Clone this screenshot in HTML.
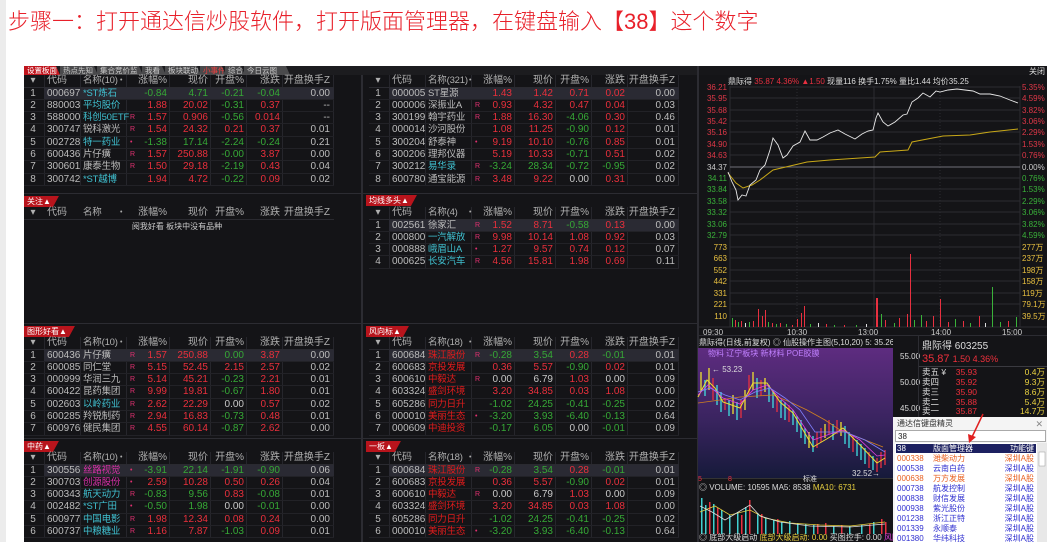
<!DOCTYPE html>
<html><head><meta charset="utf-8"><style>
*{margin:0;padding:0;box-sizing:border-box}
body{width:1064px;height:542px;overflow:hidden;background:#fff;position:relative;font-family:"Liberation Sans","Noto Sans CJK SC",sans-serif}
.title{position:absolute;left:8px;top:4px;font-size:22px;color:#e8202a;font-family:"Liberation Sans","Noto Sans CJK SC",sans-serif;white-space:nowrap;font-weight:300}
.lstrip{position:absolute;left:0;top:0;width:6px;height:542px;background:#ececec}
.dark{position:absolute;left:24px;top:66px;width:1023px;height:476px;background:#141417}
.tabs{position:absolute;left:24px;top:66px;height:9px;width:673px;background:#1c1c1f}
.tab{position:absolute;top:0;height:9px;font-size:7.5px;line-height:9px;color:#ccc;background:#4a4a4c;padding-left:3px;clip-path:polygon(0 0,calc(100% - 4px) 0,100% 100%,0 100%)}
.tbl{position:absolute;width:310px;font-size:10px;color:#bcbcbc;background:
linear-gradient(#26262c,#26262c) 20px 0/1px 100% no-repeat,
linear-gradient(#26262c,#26262c) 56px 0/1px 100% no-repeat,
linear-gradient(#26262c,#26262c) 102px 0/1px 100% no-repeat,
linear-gradient(#26262c,#26262c) 145px 0/1px 100% no-repeat,
linear-gradient(#26262c,#26262c) 186px 0/1px 100% no-repeat,
linear-gradient(#26262c,#26262c) 222px 0/1px 100% no-repeat,
linear-gradient(#26262c,#26262c) 258px 0/1px 100% no-repeat,
linear-gradient(#26262c,#26262c) 309px 0/1px 100% no-repeat}
.r{position:relative;height:12.3px;line-height:12px;border-bottom:1px solid #222227;white-space:nowrap}
.h{height:12.5px;border-bottom:1px solid #2a2a30;color:#b0b0b0}
.r span{position:absolute;top:0}
.n{left:0;width:18px;text-align:center}
.c{left:23px}
.m{left:59px;font-size:9.5px;letter-spacing:-0.2px}
.k{left:106px;font-size:7px;color:#e03070}
.a{left:110px;width:33px;text-align:right}
.b{left:146px;width:38px;text-align:right}
.o{left:186px;width:34px;text-align:right}
.d{left:222px;width:34px;text-align:right}
.t{left:258px;width:48px;text-align:right}
.sel{background:linear-gradient(90deg,transparent 20px,#2a2a33 20px,#2a2a33 310px,transparent 310px)}
.R{color:#e8303c}.G{color:#36a836}.W{color:#c8c8c8}.C{color:#40c0d0}.M{color:#d830a8}.RN{color:#e01c1c}
.lbl{position:absolute;height:11px;font-size:8px;line-height:11px;color:#fff;background:#b8141c;padding:0 8px 0 3px;clip-path:polygon(0 0,100% 0,calc(100% - 6px) 100%,0 100%)}
.sep{position:absolute;background:#2c2c32}
</style></head><body>
<div class="lstrip"></div>
<div class="title">步骤一：打开通达信炒股软件，打开版面管理器，在键盘输入【38】这个数字</div>
<div class="dark"></div>
<div class="tabs">
<div class="tab" style="left:0;width:36px;background:#c0141c;color:#fff">设置板面</div>
<div class="tab" style="left:36px;width:38px">热点先知</div>
<div class="tab" style="left:73px;width:46px">集合竞价监测</div>
<div class="tab" style="left:118px;width:24px">我看盘</div>
<div class="tab" style="left:141px;width:36px">板块联动</div>
<div class="tab" style="left:176px;width:26px;color:#f04040">小事件</div>
<div class="tab" style="left:201px;width:20px">综合</div>
<div class="tab" style="left:220px;width:46px">今日云图</div>
</div>
<div class="sep" style="left:361px;top:75px;width:2px;height:467px"></div>
<div class="sep" style="left:697px;top:66px;width:2px;height:476px"></div>
<div class="sep" style="left:24px;top:193px;width:673px;height:1px"></div>
<div class="sep" style="left:24px;top:323px;width:673px;height:1px"></div>
<div class="sep" style="left:24px;top:438px;width:673px;height:1px"></div>

<!-- Left top -->
<div class="tbl" style="left:24px;top:75px">
<div class="r h"><span class="n">▾</span><span class="c">代码</span><span class="m">名称(10)</span><span class="k" style="color:#aaa;left:96px">•</span><span class="a">涨幅%</span><span class="b">现价</span><span class="o">开盘%</span><span class="d">涨跌</span><span class="t">开盘换手Z</span></div>
<div class="r sel"><span class="n">1</span><span class="c">000697</span><span class="m C">*ST炼石</span><span class="a G">-0.84</span><span class="b G">4.71</span><span class="o G">-0.21</span><span class="d G">-0.04</span><span class="t">0.00</span></div>
<div class="r"><span class="n">2</span><span class="c">880003</span><span class="m C">平均股价</span><span class="a R">1.88</span><span class="b R">20.02</span><span class="o G">-0.31</span><span class="d R">0.37</span><span class="t">--</span></div>
<div class="r"><span class="n">3</span><span class="c">588000</span><span class="m C">科创50ETF</span><span class="k">R</span><span class="a R">1.57</span><span class="b R">0.906</span><span class="o G">-0.56</span><span class="d R">0.014</span><span class="t">--</span></div>
<div class="r"><span class="n">4</span><span class="c">300747</span><span class="m">锐科激光</span><span class="k">R</span><span class="a R">1.54</span><span class="b R">24.32</span><span class="o R">0.21</span><span class="d R">0.37</span><span class="t">0.01</span></div>
<div class="r"><span class="n">5</span><span class="c">002728</span><span class="m C">特一药业</span><span class="k">•</span><span class="a G">-1.38</span><span class="b G">17.14</span><span class="o G">-2.24</span><span class="d G">-0.24</span><span class="t">0.21</span></div>
<div class="r"><span class="n">6</span><span class="c">600436</span><span class="m">片仔癀</span><span class="k">R</span><span class="a R">1.57</span><span class="b R">250.88</span><span class="o G">-0.00</span><span class="d R">3.87</span><span class="t">0.00</span></div>
<div class="r"><span class="n">7</span><span class="c">300601</span><span class="m">康泰生物</span><span class="k">R</span><span class="a R">1.50</span><span class="b R">29.18</span><span class="o G">-2.19</span><span class="d R">0.43</span><span class="t">0.04</span></div>
<div class="r"><span class="n">8</span><span class="c">300742</span><span class="m C">*ST越博</span><span class="a R">1.94</span><span class="b R">4.72</span><span class="o G">-0.22</span><span class="d R">0.09</span><span class="t">0.02</span></div>
</div>

<!-- 关注 -->
<div class="lbl" style="left:24px;top:196px">关注▲</div>
<div class="tbl" style="left:24px;top:207px;background:none">
<div class="r h"><span class="n">▾</span><span class="c">代码</span><span class="m">名称</span><span class="k" style="color:#aaa;left:96px">•</span><span class="a">涨幅%</span><span class="b">现价</span><span class="o">开盘%</span><span class="d">涨跌</span><span class="t">开盘换手Z</span></div>
<div style="position:absolute;left:0;width:306px;top:14px;text-align:center;font-size:8px;color:#ccc">阅我好看 板块中没有品种</div>
</div>

<!-- Middle top -->
<div class="tbl" style="left:369px;top:75px">
<div class="r h"><span class="n">▾</span><span class="c">代码</span><span class="m">名称(321)</span><span class="k" style="color:#aaa;left:100px">•</span><span class="a">涨幅%</span><span class="b">现价</span><span class="o">开盘%</span><span class="d">涨跌</span><span class="t">开盘换手Z</span></div>
<div class="r sel"><span class="n">1</span><span class="c">000005</span><span class="m">ST星源</span><span class="a R">1.43</span><span class="b R">1.42</span><span class="o R">0.71</span><span class="d R">0.02</span><span class="t">0.00</span></div>
<div class="r"><span class="n">2</span><span class="c">000006</span><span class="m">深振业A</span><span class="k">R</span><span class="a R">0.93</span><span class="b R">4.32</span><span class="o R">0.47</span><span class="d R">0.04</span><span class="t">0.03</span></div>
<div class="r"><span class="n">3</span><span class="c">300199</span><span class="m">翰宇药业</span><span class="k">R</span><span class="a R">1.88</span><span class="b R">16.30</span><span class="o G">-4.06</span><span class="d R">0.30</span><span class="t">0.46</span></div>
<div class="r"><span class="n">4</span><span class="c">000014</span><span class="m">沙河股份</span><span class="a R">1.08</span><span class="b R">11.25</span><span class="o G">-0.90</span><span class="d R">0.12</span><span class="t">0.01</span></div>
<div class="r"><span class="n">5</span><span class="c">300204</span><span class="m">舒泰神</span><span class="k">•</span><span class="a R">9.19</span><span class="b R">10.10</span><span class="o G">-0.76</span><span class="d R">0.85</span><span class="t">0.01</span></div>
<div class="r"><span class="n">6</span><span class="c">300206</span><span class="m">理邦仪器</span><span class="a R">5.19</span><span class="b R">10.33</span><span class="o G">-0.71</span><span class="d R">0.51</span><span class="t">0.02</span></div>
<div class="r"><span class="n">7</span><span class="c">300212</span><span class="m C">易华录</span><span class="k">R</span><span class="a G">-3.24</span><span class="b G">28.34</span><span class="o G">-0.72</span><span class="d G">-0.95</span><span class="t">0.02</span></div>
<div class="r"><span class="n">8</span><span class="c">600780</span><span class="m">通宝能源</span><span class="k">R</span><span class="a R">3.48</span><span class="b R">9.22</span><span class="o W">0.00</span><span class="d R">0.31</span><span class="t">0.00</span></div>
</div>

<!-- 均线多头 -->
<div class="lbl" style="left:366px;top:195px">均线多头▲</div>
<div class="tbl" style="left:369px;top:207px">
<div class="r h"><span class="n">▾</span><span class="c">代码</span><span class="m">名称(4)</span><span class="k" style="color:#aaa;left:100px">•</span><span class="a">涨幅%</span><span class="b">现价</span><span class="o">开盘%</span><span class="d">涨跌</span><span class="t">开盘换手Z</span></div>
<div class="r sel"><span class="n">1</span><span class="c">002561</span><span class="m">徐家汇</span><span class="k">R</span><span class="a R">1.52</span><span class="b R">8.71</span><span class="o G">-0.58</span><span class="d R">0.13</span><span class="t">0.00</span></div>
<div class="r"><span class="n">2</span><span class="c">000800</span><span class="m C">一汽解放</span><span class="k">R</span><span class="a R">9.98</span><span class="b R">10.14</span><span class="o R">1.08</span><span class="d R">0.92</span><span class="t">0.03</span></div>
<div class="r"><span class="n">3</span><span class="c">000888</span><span class="m C">峨眉山A</span><span class="k">•</span><span class="a R">1.27</span><span class="b R">9.57</span><span class="o R">0.74</span><span class="d R">0.12</span><span class="t">0.07</span></div>
<div class="r"><span class="n">4</span><span class="c">000625</span><span class="m C">长安汽车</span><span class="k">R</span><span class="a R">4.56</span><span class="b R">15.81</span><span class="o R">1.98</span><span class="d R">0.69</span><span class="t">0.11</span></div>
</div>

<!-- 图形好看 -->
<div class="lbl" style="left:24px;top:326px">图形好看▲</div>
<div class="tbl" style="left:24px;top:337px">
<div class="r h"><span class="n">▾</span><span class="c">代码</span><span class="m">名称(10)</span><span class="k" style="color:#aaa;left:96px">•</span><span class="a">涨幅%</span><span class="b">现价</span><span class="o">开盘%</span><span class="d">涨跌</span><span class="t">开盘换手Z</span></div>
<div class="r sel"><span class="n">1</span><span class="c">600436</span><span class="m">片仔癀</span><span class="k">R</span><span class="a R">1.57</span><span class="b R">250.88</span><span class="o G">0.00</span><span class="d R">3.87</span><span class="t">0.00</span></div>
<div class="r"><span class="n">2</span><span class="c">600085</span><span class="m">同仁堂</span><span class="k">R</span><span class="a R">5.15</span><span class="b R">52.45</span><span class="o R">2.15</span><span class="d R">2.57</span><span class="t">0.02</span></div>
<div class="r"><span class="n">3</span><span class="c">000999</span><span class="m">华润三九</span><span class="k">R</span><span class="a R">5.14</span><span class="b R">45.21</span><span class="o G">-0.23</span><span class="d R">2.21</span><span class="t">0.01</span></div>
<div class="r"><span class="n">4</span><span class="c">600422</span><span class="m">昆药集团</span><span class="k">R</span><span class="a R">9.99</span><span class="b R">19.81</span><span class="o G">-0.67</span><span class="d R">1.80</span><span class="t">0.01</span></div>
<div class="r"><span class="n">5</span><span class="c">002603</span><span class="m C">以岭药业</span><span class="k">R</span><span class="a R">2.62</span><span class="b R">22.29</span><span class="o W">0.00</span><span class="d R">0.57</span><span class="t">0.02</span></div>
<div class="r"><span class="n">6</span><span class="c">600285</span><span class="m">羚锐制药</span><span class="k">R</span><span class="a R">2.94</span><span class="b R">16.83</span><span class="o G">-0.73</span><span class="d R">0.48</span><span class="t">0.01</span></div>
<div class="r"><span class="n">7</span><span class="c">600976</span><span class="m">健民集团</span><span class="k">R</span><span class="a R">4.55</span><span class="b R">60.14</span><span class="o G">-0.87</span><span class="d R">2.62</span><span class="t">0.00</span></div>
</div>

<!-- 中药 -->
<div class="lbl" style="left:24px;top:441px">中药▲</div>
<div class="tbl" style="left:24px;top:452px">
<div class="r h"><span class="n">▾</span><span class="c">代码</span><span class="m">名称(10)</span><span class="k" style="color:#aaa;left:96px">•</span><span class="a">涨幅%</span><span class="b">现价</span><span class="o">开盘%</span><span class="d">涨跌</span><span class="t">开盘换手Z</span></div>
<div class="r sel"><span class="n">1</span><span class="c">300556</span><span class="m M">丝路视觉</span><span class="k">•</span><span class="a G">-3.91</span><span class="b G">22.14</span><span class="o G">-1.91</span><span class="d G">-0.90</span><span class="t">0.06</span></div>
<div class="r"><span class="n">2</span><span class="c">300703</span><span class="m M">创源股份</span><span class="k">•</span><span class="a R">2.59</span><span class="b R">10.28</span><span class="o R">0.50</span><span class="d R">0.26</span><span class="t">0.04</span></div>
<div class="r"><span class="n">3</span><span class="c">600343</span><span class="m C">航天动力</span><span class="k">R</span><span class="a G">-0.83</span><span class="b G">9.56</span><span class="o R">0.83</span><span class="d G">-0.08</span><span class="t">0.01</span></div>
<div class="r"><span class="n">4</span><span class="c">002482</span><span class="m C">*ST广田</span><span class="k">•</span><span class="a G">-0.50</span><span class="b G">1.98</span><span class="o W">0.00</span><span class="d G">-0.01</span><span class="t">0.00</span></div>
<div class="r"><span class="n">5</span><span class="c">600977</span><span class="m C">中国电影</span><span class="k">R</span><span class="a R">1.98</span><span class="b R">12.34</span><span class="o R">0.08</span><span class="d R">0.24</span><span class="t">0.00</span></div>
<div class="r"><span class="n">6</span><span class="c">600737</span><span class="m C">中粮糖业</span><span class="k">R</span><span class="a R">1.16</span><span class="b R">7.87</span><span class="o G">-1.03</span><span class="d R">0.09</span><span class="t">0.01</span></div>
</div>

<!-- 风向标 -->
<div class="lbl" style="left:366px;top:326px">风向标▲</div>
<div class="tbl" style="left:369px;top:337px">
<div class="r h"><span class="n">▾</span><span class="c">代码</span><span class="m">名称(18)</span><span class="k" style="color:#aaa;left:100px">•</span><span class="a">涨幅%</span><span class="b">现价</span><span class="o">开盘%</span><span class="d">涨跌</span><span class="t">开盘换手Z</span></div>
<div class="r sel"><span class="n">1</span><span class="c">600684</span><span class="m RN">珠江股份</span><span class="k">R</span><span class="a G">-0.28</span><span class="b G">3.54</span><span class="o R">0.28</span><span class="d G">-0.01</span><span class="t">0.01</span></div>
<div class="r"><span class="n">2</span><span class="c">600683</span><span class="m RN">京投发展</span><span class="a R">0.36</span><span class="b R">5.57</span><span class="o G">-0.90</span><span class="d R">0.02</span><span class="t">0.01</span></div>
<div class="r"><span class="n">3</span><span class="c">600610</span><span class="m RN">中毅达</span><span class="k">R</span><span class="a W">0.00</span><span class="b W">6.79</span><span class="o R">1.03</span><span class="d W">0.00</span><span class="t">0.09</span></div>
<div class="r"><span class="n">4</span><span class="c">603324</span><span class="m RN">盛剑环境</span><span class="a R">3.20</span><span class="b R">34.85</span><span class="o R">0.03</span><span class="d R">1.08</span><span class="t">0.00</span></div>
<div class="r"><span class="n">5</span><span class="c">605286</span><span class="m RN">同力日升</span><span class="a G">-1.02</span><span class="b G">24.25</span><span class="o G">-0.41</span><span class="d G">-0.25</span><span class="t">0.02</span></div>
<div class="r"><span class="n">6</span><span class="c">000010</span><span class="m RN">美丽生态</span><span class="k">•</span><span class="a G">-3.20</span><span class="b G">3.93</span><span class="o G">-6.40</span><span class="d G">-0.13</span><span class="t">0.64</span></div>
<div class="r"><span class="n">7</span><span class="c">000609</span><span class="m RN">中迪投资</span><span class="a G">-0.17</span><span class="b G">6.05</span><span class="o W">0.00</span><span class="d G">-0.01</span><span class="t">0.09</span></div>
</div>

<!-- 一板 -->
<div class="lbl" style="left:366px;top:441px">一板▲</div>
<div class="tbl" style="left:369px;top:452px">
<div class="r h"><span class="n">▾</span><span class="c">代码</span><span class="m">名称(18)</span><span class="k" style="color:#aaa;left:100px">•</span><span class="a">涨幅%</span><span class="b">现价</span><span class="o">开盘%</span><span class="d">涨跌</span><span class="t">开盘换手Z</span></div>
<div class="r sel"><span class="n">1</span><span class="c">600684</span><span class="m RN">珠江股份</span><span class="k">R</span><span class="a G">-0.28</span><span class="b G">3.54</span><span class="o R">0.28</span><span class="d G">-0.01</span><span class="t">0.01</span></div>
<div class="r"><span class="n">2</span><span class="c">600683</span><span class="m RN">京投发展</span><span class="a R">0.36</span><span class="b R">5.57</span><span class="o G">-0.90</span><span class="d R">0.02</span><span class="t">0.01</span></div>
<div class="r"><span class="n">3</span><span class="c">600610</span><span class="m RN">中毅达</span><span class="k">R</span><span class="a W">0.00</span><span class="b W">6.79</span><span class="o R">1.03</span><span class="d W">0.00</span><span class="t">0.09</span></div>
<div class="r"><span class="n">4</span><span class="c">603324</span><span class="m RN">盛剑环境</span><span class="a R">3.20</span><span class="b R">34.85</span><span class="o R">0.03</span><span class="d R">1.08</span><span class="t">0.00</span></div>
<div class="r"><span class="n">5</span><span class="c">605286</span><span class="m RN">同力日升</span><span class="a G">-1.02</span><span class="b G">24.25</span><span class="o G">-0.41</span><span class="d G">-0.25</span><span class="t">0.02</span></div>
<div class="r"><span class="n">6</span><span class="c">000010</span><span class="m RN">美丽生态</span><span class="k">•</span><span class="a G">-3.20</span><span class="b G">3.93</span><span class="o G">-6.40</span><span class="d G">-0.13</span><span class="t">0.64</span></div>
</div>

<!-- Charts -->
<svg style="position:absolute;left:0;top:0" width="1064" height="542" viewBox="0 0 1064 542" font-family="Liberation Sans, Noto Sans CJK SC, sans-serif">
<defs><clipPath id="kc"><rect x="697" y="336" width="196" height="206"/></clipPath>
<linearGradient id="pg" x1="0" y1="0" x2="0" y2="1"><stop offset="0" stop-color="#5e2c80"/><stop offset="0.55" stop-color="#3a2460"/><stop offset="1" stop-color="#161a3a"/></linearGradient></defs>
<rect x="699" y="66" width="348" height="9" fill="#161619"/>
<text x="1045" y="74" font-size="8" fill="#ddd" text-anchor="end">关闭</text>
<g stroke="#2c2c32" stroke-width="1">
<line x1="730" y1="87" x2="1020" y2="87"/><line x1="730" y1="98" x2="1020" y2="98"/><line x1="730" y1="110" x2="1020" y2="110"/><line x1="730" y1="121" x2="1020" y2="121"/><line x1="730" y1="132" x2="1020" y2="132"/><line x1="730" y1="144" x2="1020" y2="144"/><line x1="730" y1="155" x2="1020" y2="155"/><line x1="730" y1="178" x2="1020" y2="178"/><line x1="730" y1="189" x2="1020" y2="189"/><line x1="730" y1="201" x2="1020" y2="201"/><line x1="730" y1="212" x2="1020" y2="212"/><line x1="730" y1="224" x2="1020" y2="224"/><line x1="730" y1="235" x2="1020" y2="235"/>
<line x1="730" y1="247" x2="1020" y2="247"/><line x1="730" y1="258" x2="1020" y2="258"/><line x1="730" y1="270" x2="1020" y2="270"/><line x1="730" y1="281" x2="1020" y2="281"/><line x1="730" y1="293" x2="1020" y2="293"/><line x1="730" y1="304" x2="1020" y2="304"/><line x1="730" y1="316" x2="1020" y2="316"/>
<line x1="699" y1="327" x2="1047" y2="327"/>
<line x1="730" y1="86" x2="730" y2="327"/><line x1="1020" y1="86" x2="1020" y2="327"/>
<line x1="797" y1="86" x2="797" y2="327" stroke-dasharray="1 2"/><line x1="874" y1="86" x2="874" y2="327"/><line x1="940" y1="86" x2="940" y2="327" stroke-dasharray="1 2"/>
</g>
<line x1="730" y1="167" x2="1020" y2="167" stroke="#707078"/>
<text x="728" y="84" font-size="8" fill="#ddd">鼎际得 <tspan fill="#e83040">35.87 4.36% ▲1.50</tspan> 现量116 换手1.75% 量比1.44 均价35.25</text>
<g font-size="8" fill="#e03848" text-anchor="end">
<text x="727" y="90">36.21</text><text x="727" y="101">35.95</text><text x="727" y="113">35.68</text><text x="727" y="124">35.42</text><text x="727" y="135">35.16</text><text x="727" y="147">34.90</text><text x="727" y="158">34.63</text></g>
<text x="727" y="170" font-size="8" fill="#ccc" text-anchor="end">34.37</text>
<g font-size="8" fill="#3ab23a" text-anchor="end">
<text x="727" y="181">34.11</text><text x="727" y="192">33.84</text><text x="727" y="204">33.58</text><text x="727" y="215">33.32</text><text x="727" y="227">33.06</text><text x="727" y="238">32.79</text></g>
<g font-size="8" fill="#e8c040" text-anchor="end">
<text x="727" y="250">773</text><text x="727" y="261">663</text><text x="727" y="273">552</text><text x="727" y="284">442</text><text x="727" y="296">331</text><text x="727" y="307">221</text><text x="727" y="319">110</text></g>
<g font-size="8" fill="#e03848">
<text x="1022" y="90">5.35%</text><text x="1022" y="101">4.59%</text><text x="1022" y="113">3.82%</text><text x="1022" y="124">3.06%</text><text x="1022" y="135">2.29%</text><text x="1022" y="147">1.53%</text><text x="1022" y="158">0.76%</text></g>
<text x="1022" y="170" font-size="8" fill="#ccc">0.00%</text>
<g font-size="8" fill="#3ab23a">
<text x="1022" y="181">0.76%</text><text x="1022" y="192">1.53%</text><text x="1022" y="204">2.29%</text><text x="1022" y="215">3.06%</text><text x="1022" y="227">3.82%</text><text x="1022" y="238">4.59%</text></g>
<g font-size="8" fill="#e8c040">
<text x="1022" y="250">277万</text><text x="1022" y="261">237万</text><text x="1022" y="273">198万</text><text x="1022" y="284">158万</text><text x="1022" y="296">119万</text><text x="1022" y="307">79.1万</text><text x="1022" y="319">39.5万</text></g>
<g font-size="8" fill="#ccc"><text x="703" y="335">09:30</text><text x="787" y="335">10:30</text><text x="858" y="335">13:00</text><text x="931" y="335">14:00</text><text x="1002" y="335">15:00</text></g>
<polyline fill="none" stroke="#c8a818" stroke-width="1" points="728,173 736,183 743,188 752,185 760,180 773,170 790,166 807,162 830,160 860,158 875,157 880,152 908,150 912,142 943,136 970,135 990,132 1018,129"/>
<polyline fill="none" stroke="#e8e8e8" stroke-width="0.9" points="728,172 732,182 736,190 738,200 742,195 746,196 750,185 756,180 760,170 765,165 770,150 773,138 778,145 783,158 787,155 793,146 800,142 805,131 810,140 817,140 823,137 830,133 838,130 845,134 855,139 862,134 868,131 873,130 876,118 878,113 883,122 888,126 895,122 903,115 907,114 912,102 918,98 923,93 930,97 936,91 940,92 948,90 957,89 965,90 973,91 980,94 990,94 1000,96 1010,100 1018,103"/>
<g>
<rect x="732" y="318" width="1" height="9" fill="#3ab23a"/><rect x="735" y="320" width="1" height="7" fill="#e83040"/><rect x="738" y="322" width="1" height="5" fill="#3ab23a"/><rect x="741" y="321" width="1" height="6" fill="#e83040"/><rect x="745" y="323" width="1" height="4" fill="#ddd"/><rect x="749" y="322" width="1" height="5" fill="#3ab23a"/><rect x="753" y="321" width="1" height="6" fill="#e83040"/><rect x="758" y="309" width="1" height="18" fill="#e83040"/><rect x="762" y="316" width="1" height="11" fill="#e83040"/><rect x="765" y="310" width="1" height="17" fill="#e83040"/><rect x="768" y="322" width="1" height="5" fill="#3ab23a"/><rect x="772" y="323" width="1" height="4" fill="#e83040"/><rect x="776" y="324" width="1" height="3" fill="#3ab23a"/><rect x="780" y="323" width="1" height="4" fill="#e83040"/><rect x="786" y="324" width="1" height="3" fill="#3ab23a"/><rect x="792" y="325" width="1" height="2" fill="#e83040"/><rect x="797" y="319" width="1" height="8" fill="#e83040"/><rect x="801" y="313" width="1" height="14" fill="#e83040"/><rect x="804" y="306" width="1" height="21" fill="#e83040"/><rect x="810" y="324" width="1" height="3" fill="#3ab23a"/><rect x="818" y="323" width="1" height="4" fill="#ddd"/><rect x="826" y="324" width="1" height="3" fill="#e83040"/><rect x="834" y="325" width="1" height="2" fill="#3ab23a"/><rect x="844" y="325" width="1" height="2" fill="#e83040"/><rect x="856" y="325" width="1" height="2" fill="#3ab23a"/><rect x="866" y="324" width="1" height="3" fill="#ddd"/><rect x="876" y="298" width="2" height="29" fill="#e83040"/><rect x="881" y="314" width="1" height="13" fill="#3ab23a"/><rect x="885" y="320" width="1" height="7" fill="#e83040"/><rect x="894" y="323" width="1" height="4" fill="#3ab23a"/><rect x="899" y="318" width="1" height="9" fill="#e83040"/><rect x="907" y="314" width="1" height="13" fill="#e83040"/><rect x="910" y="254" width="1" height="73" fill="#e83040"/><rect x="914" y="320" width="1" height="7" fill="#3ab23a"/><rect x="921" y="315" width="1" height="12" fill="#3ab23a"/><rect x="926" y="321" width="1" height="6" fill="#e83040"/><rect x="933" y="316" width="1" height="11" fill="#e83040"/><rect x="940" y="299" width="1" height="28" fill="#e83040"/><rect x="948" y="322" width="1" height="5" fill="#e83040"/><rect x="955" y="319" width="1" height="8" fill="#3ab23a"/><rect x="963" y="321" width="1" height="6" fill="#e83040"/><rect x="970" y="323" width="1" height="4" fill="#3ab23a"/><rect x="979" y="316" width="1" height="11" fill="#e83040"/><rect x="985" y="323" width="1" height="4" fill="#ddd"/><rect x="992" y="287" width="1" height="40" fill="#3ab23a"/><rect x="1000" y="322" width="1" height="5" fill="#3ab23a"/><rect x="1008" y="321" width="1" height="6" fill="#e83040"/><rect x="1016" y="317" width="1" height="10" fill="#3ab23a"/>
</g>

<!-- K line panel -->
<rect x="697" y="335" width="350" height="1" fill="#2c2c32"/>
<g clip-path="url(#kc)">
<text x="699" y="345" font-size="8" fill="#ddd">鼎际得(日线,前复权) ◎ 仙股操作主图(5,10,20) 5: 35.26 <tspan fill="#e8d040">10: 34.50</tspan></text>
<rect x="698" y="348" width="195" height="130" fill="url(#pg)"/>
<text x="708" y="356" font-size="8" fill="#c080ff">物料 辽宁板块 新材料 POE胶膜</text>
<text x="712" y="372" font-size="8" fill="#ddd">← 53.23</text>
<text x="852" y="476" font-size="8" fill="#ddd">32.52→</text>
<g stroke-width="1.3">
<line x1="701" y1="372" x2="701" y2="392" stroke="#f0e030"/><line x1="705" y1="380" x2="705" y2="396" stroke="#40e0e0"/><line x1="709" y1="368" x2="709" y2="390" stroke="#f0e030"/><line x1="713" y1="378" x2="713" y2="400" stroke="#e83040"/><line x1="717" y1="385" x2="717" y2="405" stroke="#40e0e0"/><line x1="721" y1="392" x2="721" y2="412" stroke="#40e0e0"/><line x1="725" y1="398" x2="725" y2="410" stroke="#e83040"/><line x1="729" y1="400" x2="729" y2="416" stroke="#40e0e0"/><line x1="733" y1="395" x2="733" y2="414" stroke="#f0e030"/><line x1="737" y1="402" x2="737" y2="420" stroke="#40e0e0"/><line x1="741" y1="400" x2="741" y2="418" stroke="#e83040"/><line x1="745" y1="390" x2="745" y2="410" stroke="#f0e030"/><line x1="749" y1="375" x2="749" y2="395" stroke="#e83040"/><line x1="753" y1="372" x2="753" y2="390" stroke="#f0e030"/><line x1="757" y1="378" x2="757" y2="398" stroke="#40e0e0"/><line x1="761" y1="380" x2="761" y2="396" stroke="#e83040"/><line x1="765" y1="378" x2="765" y2="392" stroke="#f0e030"/><line x1="769" y1="385" x2="769" y2="402" stroke="#40e0e0"/><line x1="773" y1="390" x2="773" y2="408" stroke="#40e0e0"/><line x1="777" y1="396" x2="777" y2="412" stroke="#e83040"/><line x1="781" y1="400" x2="781" y2="418" stroke="#40e0e0"/><line x1="785" y1="402" x2="785" y2="420" stroke="#40e0e0"/><line x1="789" y1="405" x2="789" y2="422" stroke="#e83040"/><line x1="793" y1="410" x2="793" y2="425" stroke="#40e0e0"/><line x1="797" y1="416" x2="797" y2="432" stroke="#40e0e0"/><line x1="801" y1="420" x2="801" y2="438" stroke="#40e0e0"/><line x1="805" y1="428" x2="805" y2="444" stroke="#40e0e0"/><line x1="809" y1="432" x2="809" y2="448" stroke="#f0e030"/><line x1="813" y1="436" x2="813" y2="452" stroke="#40e0e0"/><line x1="817" y1="432" x2="817" y2="448" stroke="#e83040"/><line x1="821" y1="428" x2="821" y2="442" stroke="#e83040"/><line x1="825" y1="424" x2="825" y2="438" stroke="#f0e030"/><line x1="829" y1="420" x2="829" y2="434" stroke="#e83040"/><line x1="833" y1="424" x2="833" y2="440" stroke="#40e0e0"/><line x1="837" y1="420" x2="837" y2="434" stroke="#e83040"/><line x1="841" y1="422" x2="841" y2="436" stroke="#f0e030"/><line x1="845" y1="426" x2="845" y2="444" stroke="#40e0e0"/><line x1="849" y1="432" x2="849" y2="448" stroke="#40e0e0"/><line x1="853" y1="436" x2="853" y2="452" stroke="#e83040"/><line x1="857" y1="440" x2="857" y2="456" stroke="#40e0e0"/><line x1="861" y1="444" x2="861" y2="460" stroke="#40e0e0"/><line x1="865" y1="448" x2="865" y2="464" stroke="#40e0e0"/><line x1="869" y1="452" x2="869" y2="468" stroke="#e83040"/><line x1="873" y1="456" x2="873" y2="470" stroke="#40e0e0"/><line x1="877" y1="458" x2="877" y2="472" stroke="#e83040"/><line x1="881" y1="452" x2="881" y2="468" stroke="#e83040"/><line x1="885" y1="450" x2="885" y2="465" stroke="#e83040"/>
</g>
<polyline fill="none" stroke="#d08020" stroke-width="0.8" points="698,403 720,400 740,397 773,395 790,402 807,410 825,420 840,430 860,438 883,447"/>
<polyline fill="none" stroke="#f0e030" stroke-width="1" points="698,397 707,380 715,388 723,402 740,408 753,383 767,383 780,402 793,413 813,447 830,437 843,428 860,445 877,463 885,458"/>
<polyline fill="none" stroke="#e040e0" stroke-width="0.8" points="698,395 708,385 723,398 740,404 753,390 767,385 780,398 793,410 813,440 830,434 843,430 860,440 877,456 885,455"/>
<polyline fill="none" stroke="#8080ff" stroke-width="0.8" points="698,392 710,388 725,395 740,400 755,392 770,388 785,398 800,410 815,432 830,432 845,432 865,440 885,452"/>
<rect x="698" y="478" width="195" height="1" fill="#333"/>
<text x="698" y="481" font-size="7" fill="#e83040">5</text><text x="728" y="481" font-size="7" fill="#e83040">8</text><text x="803" y="481" font-size="7" fill="#ddd">标准</text>
<text x="699" y="490" font-size="8" fill="#ddd">◎ VOLUME: 10595 <tspan>MA5: 8538</tspan> <tspan fill="#e8d040">MA10: 6731</tspan></text>
<g fill="#40d0d0">
<rect x="701" y="498" width="1.5" height="36"/><rect x="705" y="505" width="1.5" height="29"/><rect x="713" y="504" width="1.5" height="30"/><rect x="721" y="510" width="1.5" height="24"/><rect x="729" y="515" width="1.5" height="19"/><rect x="737" y="512" width="1.5" height="22"/><rect x="745" y="507" width="1.5" height="27"/><rect x="757" y="513" width="1.5" height="21"/><rect x="765" y="518" width="1.5" height="16"/><rect x="773" y="520" width="1.5" height="14"/><rect x="781" y="522" width="1.5" height="12"/><rect x="789" y="521" width="1.5" height="13"/><rect x="797" y="523" width="1.5" height="11"/><rect x="805" y="524" width="1.5" height="10"/><rect x="813" y="525" width="1.5" height="9"/><rect x="833" y="526" width="1.5" height="8"/><rect x="849" y="526" width="1.5" height="8"/><rect x="861" y="525" width="1.5" height="9"/><rect x="873" y="522" width="1.5" height="12"/></g>
<g fill="#e83040">
<rect x="709" y="502" width="1.5" height="32"/><rect x="717" y="508" width="1.5" height="26"/><rect x="741" y="515" width="1.5" height="19"/><rect x="749" y="500" width="1.5" height="34"/><rect x="761" y="514" width="1.5" height="20"/><rect x="777" y="519" width="1.5" height="15"/><rect x="817" y="524" width="1.5" height="10"/><rect x="825" y="523" width="1.5" height="11"/><rect x="841" y="525" width="1.5" height="9"/><rect x="869" y="524" width="1.5" height="10"/><rect x="881" y="519" width="1.5" height="15"/><rect x="885" y="522" width="1.5" height="12"/></g>
<polyline fill="none" stroke="#e8d040" stroke-width="0.8" points="700,512 715,506 730,515 750,510 765,518 790,523 820,525 850,526 885,522"/>
<polyline fill="none" stroke="#ddd" stroke-width="0.8" points="700,506 712,512 725,520 740,511 750,505 760,516 780,522 810,526 850,527 885,524"/>
<text x="699" y="540" font-size="8" fill="#ddd">◎ 底部大级启动 <tspan fill="#e8d040">底部大级启动: 0.00</tspan> 买图控手: 0.00 <tspan fill="#e040e0">风险信号: 0.00</tspan></text>
</g>
<g font-size="8" fill="#ddd"><text x="900" y="359">55.00</text><text x="900" y="385">50.00</text><text x="900" y="411">45.00</text></g>
<rect x="918" y="336" width="1" height="82" fill="#2c2c32"/>
<text x="922" y="349" font-size="10" fill="#ddd">鼎际得 603255</text>
<text x="922" y="362" font-size="11" fill="#f0303c">35.87 <tspan font-size="9">1.50  4.36%</tspan></text>
<rect x="919" y="366" width="128" height="1" fill="#3a3a40"/>
<g font-size="8.5" fill="#ddd"><text x="922" y="375">卖五 ¥</text><text x="922" y="385">卖四</text><text x="922" y="395">卖三</text><text x="922" y="405">卖二</text><text x="922" y="414">卖一</text></g>
<g font-size="8.5" fill="#f0303c" text-anchor="end"><text x="977" y="375">35.93</text><text x="977" y="385">35.92</text><text x="977" y="395">35.90</text><text x="977" y="405">35.88</text><text x="977" y="414">35.87</text></g>
<g font-size="8.5" fill="#e8d040" text-anchor="end"><text x="1045" y="375">0.4万</text><text x="1045" y="385">9.3万</text><text x="1045" y="395">8.6万</text><text x="1045" y="405">5.4万</text><text x="1045" y="414">14.7万</text></g>

<!-- popup -->
<rect x="893" y="417" width="154" height="125" fill="#f4f4f4"/>
<text x="897" y="426" font-size="8" fill="#333">通达信键盘精灵</text>
<text x="1043" y="427" font-size="9" fill="#888" text-anchor="end">✕</text>
<rect x="895.5" y="430.5" width="150" height="11" fill="#fff" stroke="#aaa"/>
<text x="898" y="439" font-size="8" fill="#222">38</text>
<rect x="895" y="443" width="142" height="99" fill="#fff"/>
<rect x="896" y="444" width="140" height="9" fill="#1c2060"/>
<g font-size="8" fill="#fff"><text x="897" y="451">38</text><text x="933" y="451">版面管理器</text><text x="1034" y="451" text-anchor="end">功能键</text></g>
<g font-size="8">
<text x="897" y="461" fill="#e86020">000338</text><text x="933" y="461" fill="#e86020">潍柴动力</text><text x="1034" y="461" fill="#e86020" text-anchor="end">深圳A股</text>
<text x="897" y="471" fill="#3030d0">000538</text><text x="933" y="471" fill="#3030d0">云南白药</text><text x="1034" y="471" fill="#3030d0" text-anchor="end">深圳A股</text>
<text x="897" y="481" fill="#e86020">000638</text><text x="933" y="481" fill="#e86020">万方发展</text><text x="1034" y="481" fill="#e86020" text-anchor="end">深圳A股</text>
<text x="897" y="491" fill="#3030d0">000738</text><text x="933" y="491" fill="#3030d0">航发控制</text><text x="1034" y="491" fill="#3030d0" text-anchor="end">深圳A股</text>
<text x="897" y="501" fill="#3030d0">000838</text><text x="933" y="501" fill="#3030d0">财信发展</text><text x="1034" y="501" fill="#3030d0" text-anchor="end">深圳A股</text>
<text x="897" y="511" fill="#3030d0">000938</text><text x="933" y="511" fill="#3030d0">紫光股份</text><text x="1034" y="511" fill="#3030d0" text-anchor="end">深圳A股</text>
<text x="897" y="521" fill="#3030d0">001238</text><text x="933" y="521" fill="#3030d0">浙江正特</text><text x="1034" y="521" fill="#3030d0" text-anchor="end">深圳A股</text>
<text x="897" y="531" fill="#3030d0">001339</text><text x="933" y="531" fill="#3030d0">永顺泰</text><text x="1034" y="531" fill="#3030d0" text-anchor="end">深圳A股</text>
<text x="897" y="541" fill="#3030d0">001380</text><text x="933" y="541" fill="#3030d0">华纬科技</text><text x="1034" y="541" fill="#3030d0" text-anchor="end">深圳A股</text>
</g>
<rect x="1037" y="443" width="10" height="99" fill="#e8e8e8"/>
<rect x="1039" y="452" width="6" height="14" fill="#fff" stroke="#999" stroke-width="0.5"/>
<line x1="983" y1="414" x2="972" y2="437" stroke="#e02020" stroke-width="1.5"/>
<polygon points="969,443 968,434 976,437" fill="#e02020"/>
</svg>
</body></html>
